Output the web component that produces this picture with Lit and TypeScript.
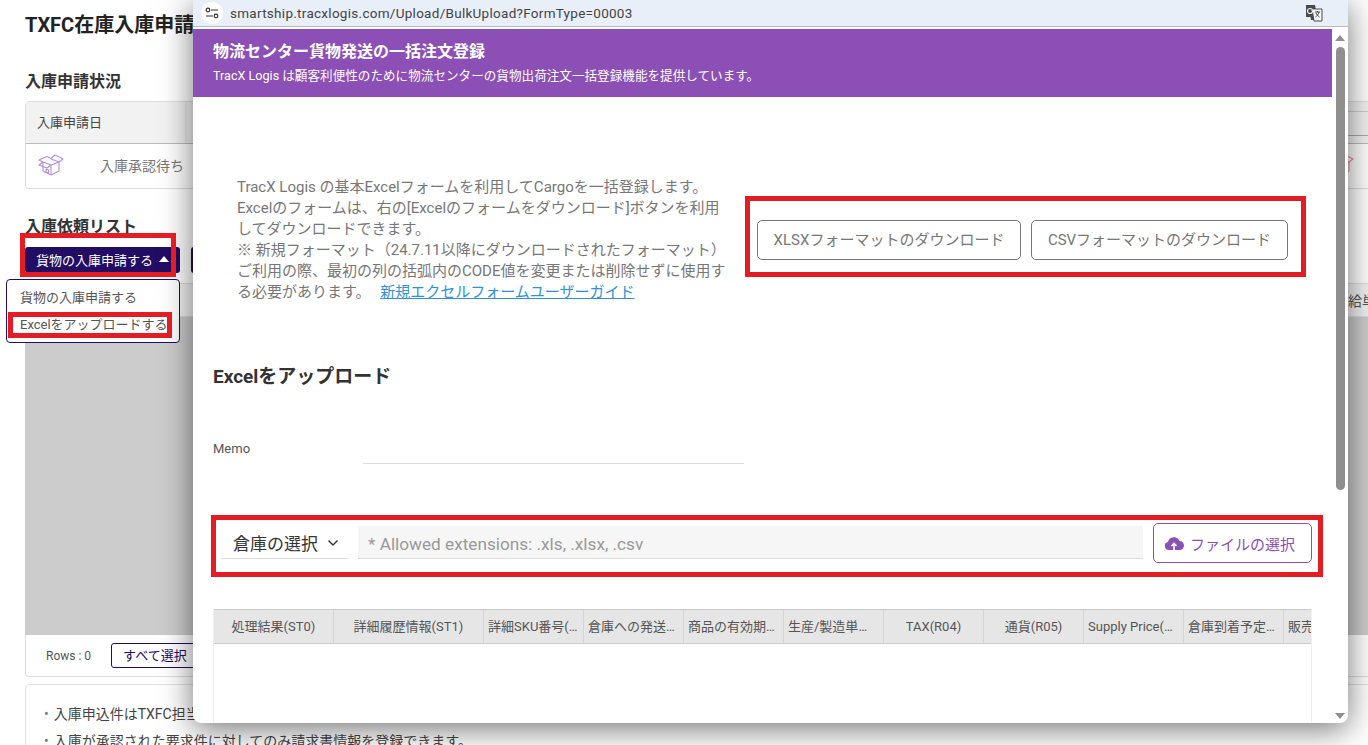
import { LitElement, html, css } from "lit";
import { customElement } from "lit/decorators.js";

const COLUMNS: [string, number][] = [
  ["処理結果(ST0)", 120],
  ["詳細履歴情報(ST1)", 150],
  ["詳細SKU番号(R01)", 100],
  ["倉庫への発送予定日", 100],
  ["商品の有効期限日", 100],
  ["生産/製造単位番号", 100],
  ["TAX(R04)", 100],
  ["通貨(R05)", 100],
  ["Supply Price(R06)", 100],
  ["倉庫到着予定日付", 100],
  ["販売単価情報入力(R09)", 100],
];

const boxIcon = (color: string) => html`
  <svg width="26" height="22" viewBox="0 0 26 22" fill="none" stroke=${color} stroke-width="1.100" stroke-linejoin="round">
    <path d="M5 8v9l8 4 8-4V8" />
    <path d="M5 8l8 3 8-3M13 11v10" />
    <path d="M5 8L1 6l8-3.500 4 2 4-3.500 8 4-4 3" />
    <path d="M13 5l8 3M13 11l-4 3-8-3 4-3" />
    <path d="M8 15v3l2.500 1v-3z" />
  </svg>
`;

@customElement("app-root")
export class AppRoot extends LitElement {
  static styles = css`
    :host {
      display: block;
      font-family: Roboto, "Noto Sans CJK JP", sans-serif;
      color: #333;
    }
    .screen {
      position: relative;
      width: 1368px;
      height: 745px;
      overflow: hidden;
      background: #fff;
    }

    /* page behind the popup, wider than the window like the real one */
    .page {
      padding: 12px 0 0 25px;
      width: 1400px;
    }
    .page h1 {
      margin: 0;
      font-size: 20px;
      line-height: 26px;
      font-weight: 700;
      color: #222;
    }
    .page h2 {
      margin: 0;
      font-size: 16px;
      line-height: 22px;
      font-weight: 700;
      color: #333;
    }
    .status-title { margin-top: 33px !important; }
    .status {
      margin-top: 8px;
      height: 88px;
      border: 1px solid #ddd;
      border-radius: 4px;
      box-sizing: border-box;
    }
    .status-head {
      height: 42px;
      background: #f2f2f2;
      border-bottom: 1px solid #bbb;
      display: flex;
      align-items: center;
      padding: 0 0 2px 11px;
      font-size: 13px;
      color: #444;
      box-sizing: border-box;
      position: relative;
    }
    .status-head::after {
      content: "";
      position: absolute;
      left: 159px;
      top: 0;
      bottom: 0;
      width: 2px;
      background: #e6e6e6;
    }
    .status-cell {
      margin-left: auto;
      width: 120px;
      height: 25px;
      border-top: 1px solid #ccc;
      border-bottom: 1px solid #aaa;
      box-sizing: border-box;
      margin-top: 4px;
    }
    .status-row {
      height: 44px;
      display: flex;
      align-items: center;
      font-size: 14px;
      color: #777;
      padding: 0 0 2px 12px;
      box-sizing: border-box;
      gap: 36px;
    }
    .status-end {
      margin-left: auto;
      margin-right: 70px;
      display: flex;
    }
    .request-title { margin-top: 28px !important; line-height: 20px !important; }
    .actions {
      margin-top: 10px;
      display: flex;
      gap: 11px;
    }
    .primary {
      width: 155px;
      height: 26px;
      box-sizing: border-box;
      background: #230c64;
      color: #fff;
      border-radius: 3px;
      display: flex;
      align-items: center;
      gap: 6px;
      padding: 0 0 2px 11px;
      font-size: 13px;
    }
    .caret {
      width: 0;
      height: 0;
      border-left: 5px solid transparent;
      border-right: 5px solid transparent;
      border-bottom: 6px solid #fff;
    }
    .primary-stub {
      width: 40px;
      height: 26px;
      background: #230c64;
      border-radius: 3px;
    }
    .grid-head {
      margin-top: 10px;
      height: 34px;
      display: flex;
      align-items: center;
      padding-left: 1323px;
      background: #f2f2f2;
      border-top: 1px solid #ddd;
      border-bottom: 1px solid #ddd;
      box-sizing: border-box;
      font-size: 14px;
      color: #555;
      white-space: nowrap;
      overflow: hidden;
    }
    .grid-body {
      height: 318px;
      background: #cccccc;
    }
    .grid-foot {
      height: 42px;
      border: 1px solid #ddd;
      border-top: 0;
      border-radius: 0 0 4px 4px;
      box-sizing: border-box;
      display: flex;
      align-items: center;
      padding: 0 0 0 20px;
      gap: 20px;
      font-size: 12px;
      color: #555;
    }
    .outline {
      height: 25px;
      width: 100px;
      box-sizing: border-box;
      border: 1px solid #230c64;
      border-radius: 3px;
      color: #230c64;
      font-size: 13px;
      display: flex;
      align-items: center;
      padding: 0 0 2px 11px;
    }
    .notes {
      margin-top: 7px;
      border: 1px solid #e2e2e2;
      border-radius: 4px 4px 0 0;
      height: 100px;
      box-sizing: border-box;
      padding: 16px 0 0 18px;
      font-size: 14px;
      line-height: 27px;
      color: #444;
    }
    .notes div::before {
      content: "•";
      margin-right: 5px;
      color: #777;
    }

    /* dropdown over the page */
    .menu {
      position: absolute;
      left: 6px;
      top: 279px;
      width: 174px;
      height: 64px;
      box-sizing: border-box;
      background: #fff;
      border: 1px solid #230c64;
      border-radius: 4px;
      padding: 4px 0 0 13px;
      font-size: 13px;
      line-height: 27px;
      color: #555;
    }

    /* browser popup window */
    .popup {
      position: absolute;
      left: 193px;
      top: 0;
      width: 1155px;
      height: 723px;
      background: #fff;
      border-radius: 0 0 8px 8px;
      box-shadow: 0 6px 32px rgba(0, 0, 0, 0.55);
      display: flex;
      flex-direction: column;
      overflow: hidden;
    }
    .address {
      height: 27px;
      box-sizing: border-box;
      flex: none;
      background: #e9eff8;
      border-bottom: 1px solid #b9b9c2;
      display: flex;
      align-items: center;
      font-size: 13.5px;
      color: #444;
      padding: 0 25px 0 8px;
    }
    .tune {
      width: 22px;
      height: 22px;
      border-radius: 50%;
      background: #fff;
      display: flex;
      align-items: center;
      justify-content: center;
      margin-right: 7px;
    }
    .url { flex: 1; letter-spacing: 0.28px; }
    .body {
      flex: 1;
      min-height: 0;
      display: flex;
      padding-top: 2px;
    }
    .main {
      width: 1139px;
      flex: none;
      overflow: hidden;
    }
    .banner {
      height: 68px;
      background: #8c4fb6;
      color: #fff;
      padding: 12px 0 0 20px;
      box-sizing: border-box;
    }
    .banner-title {
      font-size: 16px;
      line-height: 21px;
      font-weight: 700;
    }
    .banner-sub {
      margin-top: 6px;
      font-size: 12.6px;
      line-height: 16px;
    }
    .intro {
      display: flex;
      margin-top: 80px;
    }
    .intro-text {
      width: 490px;
      height: 125px;
      margin-left: 44px;
      font-size: 15px;
      line-height: 20.9px;
      color: #777;
    }
    .intro-text a {
      color: #2f8fe0;
      text-decoration: underline;
      margin-left: 6px;
    }
    .downloads {
      display: flex;
      gap: 10px;
      margin: 43px 0 0 30px;
    }
    .dl {
      height: 40px;
      box-sizing: border-box;
      border: 1px solid #777;
      border-radius: 5px;
      display: flex;
      align-items: center;
      justify-content: center;
      padding-bottom: 3px;
      font-size: 15px;
      color: #777;
    }
    .dl.xlsx { width: 264px; }
    .dl.csv { width: 257px; }
    .upload-title {
      margin: 61px 0 0 20px;
      font-size: 19px;
      line-height: 27px;
      font-weight: 700;
      color: #333;
    }
    .memo {
      display: flex;
      margin: 44px 0 0 20px;
      height: 38px;
      font-size: 13px;
      color: #555;
    }
    .memo span { width: 150px; line-height: 30px; }
    .memo i {
      display: block;
      width: 381px;
      height: 29px;
      border-bottom: 1px solid #ddd;
    }
    .file-row {
      display: flex;
      align-items: flex-start;
      margin: 51px 0 0 28px;
      height: 40px;
    }
    .select {
      width: 127px;
      height: 33px;
      margin-top: 3px;
      box-sizing: border-box;
      border-bottom: 1px solid #ddd;
      display: flex;
      align-items: center;
      padding: 1px 0 0 12px;
      gap: 9px;
      font-size: 17px;
      color: #333;
    }
    .file-input {
      width: 785px;
      height: 33px;
      margin: 3px 0 0 10px;
      box-sizing: border-box;
      background: #f6f6f6;
      border-bottom: 1px solid #ddd;
      display: flex;
      align-items: center;
      padding: 4px 0 0 10px;
      font-size: 17.2px;
      color: #999;
    }
    .file-btn {
      width: 159px;
      height: 40px;
      margin-left: 10px;
      box-sizing: border-box;
      border: 1px solid #8c4fb6;
      border-radius: 5px;
      display: flex;
      align-items: center;
      justify-content: center;
      gap: 6px;
      padding-right: 6px;
      font-size: 15px;
      color: #8c4fb6;
    }
    .table {
      margin: 46px 0 0 20px;
      width: 1099px;
      height: 200px;
      border-left: 1px solid #eee;
      border-right: 1px solid #f0f0f0;
      box-sizing: border-box;
      overflow: hidden;
    }
    .thead {
      display: flex;
      height: 35px;
      background: #e6e6e6;
      border-top: 1px solid #ccc;
      border-bottom: 1px solid #ccc;
      box-sizing: border-box;
    }
    .th {
      flex: none;
      box-sizing: border-box;
      border-right: 1px solid #d4d4d4;
      padding: 0 4px;
      font-size: 13px;
      line-height: 33px;
      text-align: center;
      color: #555;
      white-space: nowrap;
      overflow: hidden;
      text-overflow: ellipsis;
    }
    .scrollbar {
      width: 16px;
      flex: none;
      display: flex;
      flex-direction: column;
      align-items: center;
    }
    .arrow-up {
      margin-top: 6px;
      width: 0;
      height: 0;
      border-left: 5px solid transparent;
      border-right: 5px solid transparent;
      border-bottom: 6px solid #8f8f8f;
      flex: none;
    }
    .thumb {
      margin-top: 6px;
      width: 9px;
      height: 443px;
      background: #8f8f8f;
      border-radius: 5px;
      flex: none;
    }
    .arrow-down {
      margin-top: auto;
      margin-bottom: 4px;
      width: 0;
      height: 0;
      border-left: 5px solid transparent;
      border-right: 5px solid transparent;
      border-top: 6px solid #8f8f8f;
      flex: none;
    }

    /* red annotation boxes drawn on top of the screenshot */
    .mark {
      position: absolute;
      box-sizing: border-box;
      border: 5px solid #e31d23;
      pointer-events: none;
    }
  `;

  render() {
    return html`
      <div class="screen">
        <div class="page">
          <h1>TXFC在庫入庫申請</h1>
          <h2 class="status-title">入庫申請状況</h2>
          <div class="status">
            <div class="status-head">入庫申請日<span class="status-cell"></span></div>
            <div class="status-row">
              ${boxIcon("#b48fd6")}
              <span>入庫承認待ち</span>
              <span class="status-end">${boxIcon("#e58a9c")}</span>
            </div>
          </div>
          <h2 class="request-title">入庫依頼リスト</h2>
          <div class="actions">
            <div class="primary">貨物の入庫申請する<span class="caret"></span></div>
            <div class="primary-stub"></div>
          </div>
          <div class="grid-head"><span>給単価</span></div>
          <div class="grid-body"></div>
          <div class="grid-foot">
            <span>Rows : 0</span>
            <div class="outline">すべて選択</div>
          </div>
          <div class="notes">
            <div>入庫申込件はTXFC担当者が確認後に承認されます。</div>
            <div>入庫が承認された要求件に対してのみ請求書情報を登録できます。</div>
          </div>
        </div>

        <div class="menu">
          <div>貨物の入庫申請する</div>
          <div>Excelをアップロードする</div>
        </div>

        <div class="popup">
          <div class="address">
            <span class="tune">
              <svg width="14" height="12" viewBox="0 0 14 12" fill="none" stroke="#333" stroke-width="1.200">
                <circle cx="3" cy="3" r="1.800" />
                <path d="M6 3h7M1 9h7" />
                <circle cx="11" cy="9" r="1.800" />
              </svg>
            </span>
            <span class="url">smartship.tracxlogis.com/Upload/BulkUpload?FormType=00003</span>
            <svg width="18" height="18" viewBox="0 0 18 18">
              <path d="M1 1h9l3 15H6L5.500 13H1z" fill="#4a4a4a" />
              <path d="M7 5h10v12H9z" fill="#f4f6fa" stroke="#4a4a4a" />
              <circle cx="5" cy="7" r="2.500" fill="none" stroke="#e9eff8" stroke-width="1.200" />
              <path d="M10 8h5M12.500 7v1M14 8c-.5 2.500-2 4-3.500 5M11 9c.5 1.500 2 3 3.500 4" stroke="#4a4a4a" fill="none" />
            </svg>
          </div>
          <div class="body">
            <div class="main">
              <div class="banner">
                <div class="banner-title">物流センター貨物発送の一括注文登録</div>
                <div class="banner-sub">TracX Logis は顧客利便性のために物流センターの貨物出荷注文一括登録機能を提供しています。</div>
              </div>
              <div class="intro">
                <div class="intro-text">
                  TracX Logis の基本Excelフォームを利用してCargoを一括登録します。<br />
                  Excelのフォームは、右の[Excelのフォームをダウンロード]ボタンを利用してダウンロードできます。<br />
                  ※ 新規フォーマット（24.7.11以降にダウンロードされたフォーマット）ご利用の際、最初の列の括弧内のCODE値を変更または削除せずに使用する必要があります。
                  <a>新規エクセルフォームユーザーガイド</a>
                </div>
                <div class="downloads">
                  <div class="dl xlsx">XLSXフォーマットのダウンロード</div>
                  <div class="dl csv">CSVフォーマットのダウンロード</div>
                </div>
              </div>
              <div class="upload-title">Excelをアップロード</div>
              <div class="memo"><span>Memo</span><i></i></div>
              <div class="file-row">
                <div class="select">
                  倉庫の選択
                  <svg width="12" height="8" viewBox="0 0 12 8" fill="none" stroke="#333" stroke-width="1.400"><path d="M1.500 1.500L6 6l4.500-4.500" /></svg>
                </div>
                <div class="file-input">* Allowed extensions: .xls, .xlsx, .csv</div>
                <div class="file-btn">
                  <svg width="20" height="14" viewBox="0 0 20 14">
                    <path d="M5 14a4 4 0 0 1-1-7.900A6 6 0 0 1 15.500 5a4.500 4.500 0 0 1 0 9z" fill="#8c4fb6" />
                    <path d="M10 14V8M7.500 10L10 7.500l2.500 2.500" stroke="#fff" stroke-width="1.600" fill="none" />
                  </svg>
                  ファイルの選択
                </div>
              </div>
              <div class="table">
                <div class="thead">
                  ${COLUMNS.map(
                    ([label, width]) => html`<div class="th" style="width:${width}px">${label}</div>`
                  )}
                </div>
              </div>
            </div>
            <div class="scrollbar">
              <div class="arrow-up"></div>
              <div class="thumb"></div>
              <div class="arrow-down"></div>
            </div>
          </div>
        </div>

        <div class="mark" style="left:20px;top:233px;width:156px;height:44px"></div>
        <div class="mark" style="left:8px;top:312px;width:164px;height:26px"></div>
        <div class="mark" style="left:745px;top:196px;width:561px;height:81px"></div>
        <div class="mark" style="left:211px;top:515px;width:1112px;height:62px"></div>
      </div>
    `;
  }
}
